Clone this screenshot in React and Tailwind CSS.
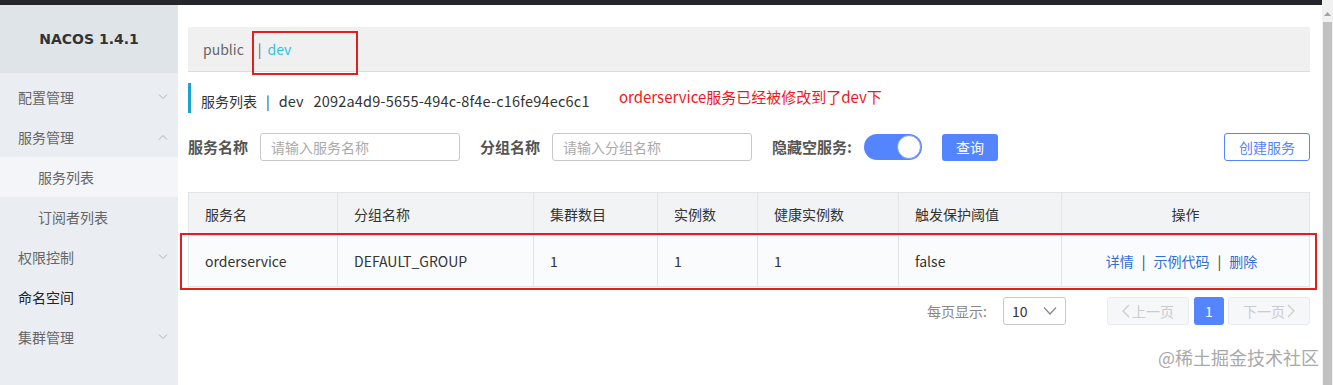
import React from 'react';

const menu = [
  { label: '配置管理', arrow: 'down' },
  { label: '服务管理', arrow: 'up' },
  { label: '服务列表', sub: true, active: true },
  { label: '订阅者列表', sub: true },
  { label: '权限控制', arrow: 'down' },
  { label: '命名空间', dark: true },
  { label: '集群管理', arrow: 'down' },
];

const cols = [
  { w: 'w-[149px]', h: '服务名', v: 'orderservice' },
  { w: 'w-[196px]', h: '分组名称', v: 'DEFAULT_GROUP' },
  { w: 'w-[124px]', h: '集群数目', v: '1' },
  { w: 'w-[100px]', h: '实例数', v: '1' },
  { w: 'w-[141px]', h: '健康实例数', v: '1' },
  { w: 'w-[163px]', h: '触发保护阈值', v: 'false' },
];

function Chevron({ up }) {
  return (
    <svg width="10" height="6" viewBox="0 0 10 6" className="text-[#aab0b8]">
      <path d={up ? 'M1 5.5 L5 1.5 L9 5.5' : 'M1 0.5 L5 4.5 L9 0.5'} fill="none" stroke="currentColor" strokeWidth="1" />
    </svg>
  );
}

function Sidebar() {
  return (
    <aside className="w-[178px] shrink-0 bg-[#eaeef2] flex flex-col">
      <div className="h-[68px] bg-[#dfe4e9] flex items-center justify-center">
        <span className="font-['DejaVu_Sans'] font-bold text-[14px] text-[#333]">NACOS 1.4.1</span>
      </div>
      <nav className="mt-[4px]">
        {menu.map((m) => (
          <div
            key={m.label}
            className={`h-[40px] flex items-center justify-between pr-[10px] text-[14px] ${m.sub ? 'pl-[38px]' : 'pl-[18px]'} ${m.active ? 'bg-[#f3f5f8]' : ''} ${m.dark ? 'text-[#222]' : 'text-[#666]'}`}
          >
            <span>{m.label}</span>
            {m.arrow && <Chevron up={m.arrow === 'up'} />}
          </div>
        ))}
      </nav>
    </aside>
  );
}

function Main() {
  return (
    <main className="relative flex-1 pl-[10px] pr-[12px] pt-[22px] bg-white">
      {/* namespace bar */}
      <div className="relative h-[45px] bg-[#f0f0f0] border-b border-[#dcdcdc] flex items-center pl-[15px] text-[14px]">
        <span className="text-[#666]">public</span>
        <span className="ml-[14px] text-[#666]">|</span>
        <span className="ml-[6px] text-[#33c3e0]">dev</span>
        <div className="absolute left-[64px] top-[4px] w-[106px] h-[44px] border-2 border-[#e0201f]" />
      </div>

      {/* title */}
      <div className="mt-[11px] h-[30px] border-l-[3px] border-[#1ba3d4] flex items-center pl-[10px] pt-[6px] text-[14px] text-[#333]">
        <span>服务列表</span>
        <span className="mx-[9px]">|</span>
        <span className="text-[14.5px]">dev</span>
        <span className="ml-[10px] text-[14.5px] tracking-[0.2px]">2092a4d9-5655-494c-8f4e-c16fe94ec6c1</span>
      </div>
      <div className="absolute left-[441px] top-[81px] text-[15px] text-[#f01818]">orderservice服务已经被修改到了dev下</div>

      {/* search */}
      <div className="mt-[20px] h-[28px] flex items-center text-[14px]">
        <span className="font-bold text-[15px] text-[#555]">服务名称</span>
        <div className="ml-[12px] w-[200px] h-[28px] border border-[#c8c8c8] rounded-[3px] flex items-center pl-[10px] text-[#aaa]">请输入服务名称</div>
        <span className="ml-[20px] font-bold text-[15px] text-[#555]">分组名称</span>
        <div className="ml-[12px] w-[200px] h-[28px] border border-[#c8c8c8] rounded-[3px] flex items-center pl-[10px] text-[#aaa]">请输入分组名称</div>
        <span className="ml-[20px] font-bold text-[15px] text-[#555]">隐藏空服务:</span>
        <div className="ml-[12px] w-[58px] h-[26px] rounded-full bg-[#5584ff] flex items-center justify-end pr-[1px]">
          <div className="w-[24px] h-[24px] rounded-full bg-white border border-[#7a9cf5]" />
        </div>
        <div className="ml-[20px] w-[56px] h-[27px] rounded-[3px] bg-[#5584ff] text-white flex items-center justify-center">查询</div>
        <div className="ml-auto w-[86px] h-[28px] rounded-[3px] border border-[#5584ff] text-[#5584ff] flex items-center justify-center">创建服务</div>
      </div>

      {/* table */}
      <div className="relative mt-[31px] border border-[#e3e4e6] text-[14px] text-[#333]">
        <div className="flex h-[43px] bg-[#f2f3f5] border-b border-[#e3e4e6]">
          {cols.map((c) => (
            <div key={c.h} className={`${c.w} border-r border-[#e3e4e6] flex items-center pl-[16px]`}>{c.h}</div>
          ))}
          <div className="flex-1 flex items-center justify-center">操作</div>
        </div>
        <div className="flex h-[50px] bg-[#fafbfc]">
          {cols.map((c) => (
            <div key={c.h} className={`${c.w} border-r border-[#e3e4e6] flex items-center pl-[16px]`}>{c.v}</div>
          ))}
          <div className="flex-1 flex items-center justify-center text-[#2f6fd6] pr-[8px]">
            <span>详情</span>
            <span className="mx-[8px] text-[#333]">|</span>
            <span>示例代码</span>
            <span className="mx-[8px] text-[#333]">|</span>
            <span>删除</span>
          </div>
        </div>
        <div className="absolute left-[-9px] top-[40px] w-[1137px] h-[57px] border-2 border-[#e0201f]" />
      </div>

      {/* pagination */}
      <div className="mt-[10px] flex items-center justify-end text-[14px]">
        <span className="text-[#888]">每页显示:</span>
        <div className="ml-[16px] w-[63px] h-[28px] border border-[#c8c8c8] rounded-[3px] flex items-center justify-between pl-[8px] pr-[8px] text-[#333]">
          <span>10</span>
          <svg width="14" height="8" viewBox="0 0 14 8"><path d="M1 0.5 L7 7 L13 0.5" fill="none" stroke="#888" strokeWidth="1.2" /></svg>
        </div>
        <div className="ml-[41px] w-[82px] h-[28px] rounded-[3px] border border-[#e8eaed] bg-[#f6f7f9] text-[#c8cbd0] flex items-center justify-center gap-[2px]">
          <svg width="8" height="14" viewBox="0 0 8 14"><path d="M7 1 L1 7 L7 13" fill="none" stroke="#c8cbd0" strokeWidth="1.2" /></svg>
          <span>上一页</span>
        </div>
        <div className="ml-[5px] w-[30px] h-[28px] rounded-[3px] bg-[#5584ff] text-white flex items-center justify-center">1</div>
        <div className="ml-[4px] w-[82px] h-[28px] rounded-[3px] border border-[#e8eaed] bg-[#f6f7f9] text-[#c8cbd0] flex items-center justify-center gap-[2px]">
          <span>下一页</span>
          <svg width="8" height="14" viewBox="0 0 8 14"><path d="M1 1 L7 7 L1 13" fill="none" stroke="#c8cbd0" strokeWidth="1.2" /></svg>
        </div>
      </div>

      <div className="absolute right-[3px] bottom-[14px] text-[18px] text-[#a9a9a9]">@稀土掘金技术社区</div>
    </main>
  );
}

export default function App() {
  return (
    <div className="w-[1333px] h-[385px] overflow-hidden flex font-['Noto_Sans_CJK_SC',sans-serif] bg-white">
      <div className="flex-1 flex flex-col">
        <div className="h-[5px] bg-[#23262b]" />
        <div className="flex-1 flex">
          <Sidebar />
          <Main />
        </div>
      </div>
      <div className="w-[11px] bg-[#f1f1f1] flex flex-col items-center">
        <svg width="7" height="4" viewBox="0 0 7 4" className="mt-[12px]"><path d="M0 4 L3.5 0 L7 4 Z" fill="#a3a3a3" /></svg>
        <div className="mt-[6px] w-[9px] flex-1 bg-[#c1c1c1]" />
      </div>
    </div>
  );
}
